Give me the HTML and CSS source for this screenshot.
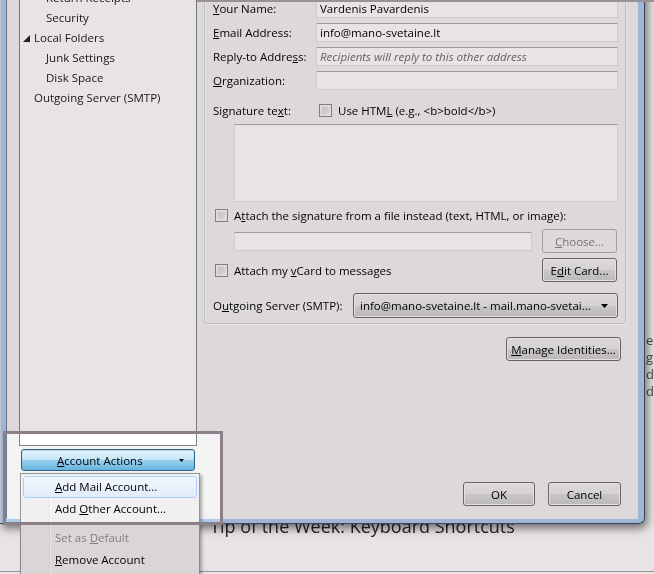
FILE: index.html
```html
<!DOCTYPE html>
<html>
<head>
<meta charset="utf-8">
<title>Account Settings</title>
<link rel="stylesheet" href="styles.css">
</head>
<body>
<div class="app">
  <div class="app-body">
    <div class="app-content"><div class="tip">Tip of the Week: Keyboard Shortcuts</div></div>
    <div class="app-side"><span>e</span><span>g</span><span>d</span><span>d</span></div>
  </div>
  <div class="app-status"></div>
</div>

<div class="dialog">
  <div class="client">
    <div class="leftcol">
      <ul class="tree">
        <li class="l2">Return Receipts</li>
        <li class="l2">Security</li>
        <li class="l1 twist"><svg class="twisty" width="7" height="7" viewBox="0 0 7 7"><polygon points="7,0 7,7 0,7" fill="#262626"/></svg>Local Folders</li>
        <li class="l2">Junk Settings</li>
        <li class="l2">Disk Space</li>
        <li class="l1">Outgoing Server (SMTP)</li>
      </ul>
      <button class="btn acct"><span><u>A</u>ccount Actions</span><svg width="5" height="3" viewBox="0 0 5 3"><polygon points="0,0 5,0 2.5,3" fill="#000"/></svg></button>
    </div>
    <div class="rightcol">
      <div class="group">
        <div class="row"><span class="lbl"><u>Y</u>our Name:</span><div class="input">Vardenis Pavardenis</div></div>
        <div class="row"><span class="lbl"><u>E</u>mail Address:</span><div class="input">info@mano-svetaine.lt</div></div>
        <div class="row"><span class="lbl">Reply-to Addre<u>s</u>s:</span><div class="input placeholder">Recipients will reply to this other address</div></div>
        <div class="row"><span class="lbl"><u>O</u>rganization:</span><div class="input"></div></div>
        <div class="row sig-row"><span class="lbl sig-lbl">Signature te<u>x</u>t:</span><span class="check"></span><span>Use HTM<u>L</u> (e.g., &lt;b&gt;bold&lt;/b&gt;)</span></div>
        <div class="textarea"></div>
        <div class="row attach-row"><span class="check"></span><span>A<u>t</u>tach the signature from a file instead (text, HTML, or image):</span></div>
        <div class="row file-row"><div class="input file"></div><button class="btn disabled"><u>C</u>hoose...</button></div>
        <div class="row vcard-row"><span class="check"></span><span>Attach my <u>v</u>Card to messages</span><button class="btn">E<u>d</u>it Card...</button></div>
        <div class="row smtp-row"><span class="lbl smtp-lbl">O<u>u</u>tgoing Server (SMTP):</span><div class="select"><span>info@mano-svetaine.lt - mail.mano-svetai...</span><svg width="7" height="4" viewBox="0 0 7 4"><polygon points="0,0 7,0 3.5,4" fill="#000"/></svg></div></div>
      </div>
      <div class="manage-row"><button class="btn manage"><u>M</u>anage Identities...</button></div>
      <div class="spacer"></div>
      <div class="footer"><button class="btn ok">OK</button><button class="btn cancel">Cancel</button></div>
    </div>
  </div>
</div>

<div class="menu">
  <div class="mi hot"><u>A</u>dd Mail Account...</div>
  <div class="mi">Add <u>O</u>ther Account...</div>
  <div class="sep"></div>
  <div class="mi off">Set as <u>D</u>efault</div>
  <div class="mi"><u>R</u>emove Account</div>
</div>

<div class="spot"></div>
<div class="topline"></div>
</body>
</html>
```

FILE: styles.css
```css
* { box-sizing: border-box; }
html, body { margin: 0; padding: 0; }
body {
  width: 654px;
  height: 574px;
  overflow: hidden;
  position: relative;
  background: #fff;
  font-family: "Open Sans", "Noto Sans", sans-serif;
  font-size: 11.5px;
  color: #000;
}
u { text-decoration: underline; text-underline-offset: 1px; }

/* background application window */
.app { height: 574px; display: flex; flex-direction: column; background: #fff; }
.app-body { flex: 1; display: flex; }
.app-content { flex: 1; padding: 514px 0 0 210px; }
.tip { font-size: 18px; line-height: 24px; color: #262626; white-space: nowrap; }
.app-side {
  width: 8px;
  padding-top: 332px;
  display: flex;
  flex-direction: column;
  font-size: 13px;
  line-height: 17px;
  color: #555;
  overflow: hidden;
}
.app-status { height: 3px; border-top: 1px solid #a9a4a8; }

/* dialog window */
.dialog {
  position: absolute;
  left: 0;
  top: -40px;
  width: 645px;
  height: 564px;
  padding: 0 6px 4px 6px;
  background: linear-gradient(to right, #d4dae2 0, #d4dae2 1px, #aecbee 1px);
  border-right: 1px solid #3f4f63;
  border-bottom: 1px solid #3f4f63;
  border-bottom-right-radius: 6px;
  box-shadow: 2px 4px 10px rgba(0, 0, 0, 0.55);
}
.client {
  height: 559px;
  display: flex;
  padding-left: 12px;
  background: #f3f3f3;
  border-left: 1px solid #6f7e90;
  border-right: 1px solid #eef3f9;
  border-bottom: 1px solid #eef3f9;
}
.leftcol { width: 178px; display: flex; flex-direction: column; }
.tree {
  flex: 1;
  list-style: none;
  margin: 0;
  padding: 27px 0 0 0;
  background: #fff;
  border: 1px solid #828790;
  overflow: hidden;
}
.tree li { height: 20px; line-height: 20px; white-space: nowrap; color: #1a1a1a; }
.tree .l1 { padding-left: 14px; }
.tree .l1.twist { padding-left: 3px; }
.tree .l2 { padding-left: 26px; }
.twisty { margin-right: 4px; vertical-align: 0px; }

.btn {
  font: inherit;
  color: #000;
  height: 24px;
  padding: 0;
  border: 1px solid #707070;
  border-radius: 3px;
  background: linear-gradient(#f2f2f2 0%, #ebebeb 50%, #dddddd 51%, #cfcfcf 100%);
  box-shadow: inset 0 0 0 1px #fbfbfb;
  white-space: nowrap;
}
.btn.disabled {
  color: #838383;
  border-color: #adb2b5;
  background: #f4f4f4;
  box-shadow: none;
}
.acct {
  height: 22px;
  margin: 3px 2px 47px 2px;
  display: flex;
  align-items: center;
  justify-content: space-between;
  padding: 0 10px 0 35px;
  border-color: #2c628b;
  background: linear-gradient(#e5f4fc 0%, #c4e5f6 50%, #98d1ef 51%, #68b3db 100%);
  box-shadow: inset 0 1px 1px rgba(0, 0, 0, 0.15);
}

.rightcol {
  flex: 1;
  display: flex;
  flex-direction: column;
  padding: 10px 11px 12px 7px;
}
.group {
  display: flex;
  flex-direction: column;
  padding: 28px 7px 5px 8px;
  border: 1px solid #d0d6db;
  border-radius: 3px;
  box-shadow: inset 1px 1px 0 #fff, 1px 1px 0 #fff;
}
.row { display: flex; align-items: center; height: 19px; margin-top: 5px; white-space: nowrap; }
.row:first-child { margin-top: 0; }
.lbl { width: 103px; flex: none; }
.input {
  flex: 1;
  height: 19px;
  line-height: 17px;
  padding-left: 3px;
  background: #fff;
  border: 1px solid #e2e3ea;
  border-top-color: #abadb3;
  overflow: hidden;
}
.input.placeholder { color: #6d6d6d; font-style: italic; }
.sig-row { margin-top: 11px; }
.sig-lbl { width: 106px; }
.check {
  width: 13px;
  height: 13px;
  flex: none;
  margin-right: 6px;
  border: 1px solid #8e8f8f;
  background: linear-gradient(135deg, #cbcfd5, #f6f6f6);
  box-shadow: inset 0 0 0 2px #f4f4f4;
}
.textarea {
  margin: 4px 0 0 21px;
  height: 78px;
  background: #fff;
  border: 1px solid #e2e3ea;
  border-top-color: #abadb3;
}
.attach-row { margin-top: 4px; padding-left: 2px; }
.file-row { margin-top: 4px; height: 24px; padding-left: 21px; }
.file-row .input { flex: none; width: 298px; }
.file-row .btn { width: 75px; margin-left: auto; margin-right: 1px; }
.vcard-row { margin-top: 5px; height: 24px; padding-left: 2px; }
.vcard-row .btn { width: 75px; margin-left: auto; margin-right: 1px; }
.smtp-row { margin-top: 11px; height: 25px; }
.smtp-lbl { width: 140px; }
.select {
  flex: 1;
  height: 25px;
  display: flex;
  align-items: center;
  justify-content: space-between;
  padding: 0 9px 0 6px;
  border: 1px solid #707070;
  border-radius: 3px;
  background: linear-gradient(#f2f2f2 0%, #ebebeb 50%, #dddddd 51%, #cfcfcf 100%);
  box-shadow: inset 0 0 0 1px #fbfbfb;
}

.manage-row { display: flex; justify-content: flex-end; margin-top: 13px; padding-right: 5px; }
.manage { width: 115px; }
.spacer { flex: 1; }
.footer { display: flex; justify-content: flex-end; gap: 13px; padding-right: 5px; }
.ok { width: 72px; }
.cancel { width: 73px; }

/* popup menu */
.menu {
  position: absolute;
  left: 20px;
  top: 473px;
  width: 180px;
  height: 110px;
  padding: 2px 0;
  border: 1px solid #979797;
  background:
    linear-gradient(to right, transparent 28px, #e2e3e3 28px, #e2e3e3 29px, #ffffff 29px, #ffffff 30px, transparent 30px),
    #f0f0f0;
  box-shadow: 2px 2px 3px rgba(0, 0, 0, 0.3);
}
.mi {
  height: 22px;
  margin: 0 2px;
  padding-left: 31px;
  line-height: 20px;
  border: 1px solid transparent;
  border-radius: 3px;
  white-space: nowrap;
}
.mi.hot {
  border-color: #aecff7;
  background: linear-gradient(#f2f7fd, #e1ecfa);
}
.mi.off { color: #8d8d8d; }
.sep {
  height: 7px;
  margin-left: 31px;
  background: linear-gradient(transparent 3px, #e0e0e0 3px, #e0e0e0 4px, #fff 4px, #fff 5px, transparent 5px);
}

/* tutorial highlight + dimming */
.spot {
  position: absolute;
  left: 3px;
  top: 431px;
  width: 220px;
  height: 94px;
  border: 3px solid #8b7f89;
  pointer-events: none;
}
.spot::before {
  content: "";
  position: absolute;
  inset: -3px;
  box-shadow: 0 0 0 2000px rgb(232, 228, 230);
  mix-blend-mode: multiply;
}
.topline {
  position: absolute;
  left: 197px;
  top: 0;
  width: 457px;
  height: 2px;
  background: #9a9098;
}
```
